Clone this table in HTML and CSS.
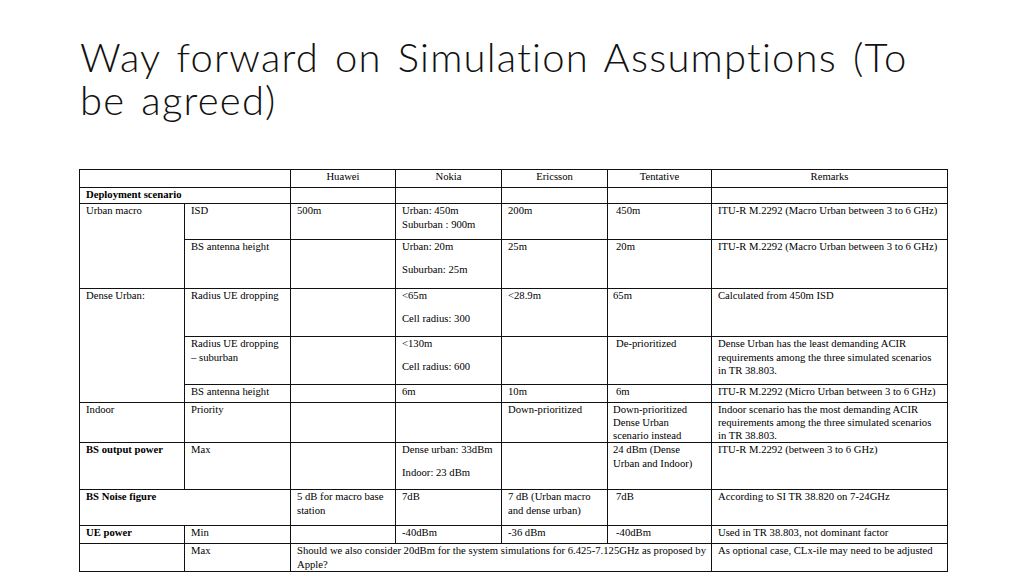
FILE: index.html
```html
<!DOCTYPE html>
<html>
<head>
<meta charset="utf-8">
<link rel="stylesheet" href="styles.css">
</head>
<body>
<div class="slide">
  <h1 class="title">Way forward on Simulation Assumptions (To be agreed)</h1>
  <table class="grid">
    <colgroup>
      <col class="c1"><col class="c2"><col class="c3"><col class="c4"><col class="c5"><col class="c6"><col class="c7">
    </colgroup>
    <tr class="r-head">
      <td colspan="2"></td>
      <td class="ctr">Huawei</td>
      <td class="ctr">Nokia</td>
      <td class="ctr">Ericsson</td>
      <td class="ctr">Tentative</td>
      <td class="ctr">Remarks</td>
    </tr>
    <tr class="r-dep">
      <td colspan="2" class="b">Deployment scenario</td>
      <td></td><td></td><td></td><td></td><td></td>
    </tr>
    <tr class="r-isd">
      <td rowspan="2">Urban macro</td>
      <td>ISD</td>
      <td>500m</td>
      <td>Urban: 450m<br>Suburban : 900m</td>
      <td>200m</td>
      <td class="t ind">450m</td>
      <td class="rm">ITU-R M.2292 (Macro Urban between 3 to 6 GHz)</td>
    </tr>
    <tr class="r-bsa">
      <td>BS antenna height</td>
      <td></td>
      <td><p>Urban: 20m</p><p>Suburban: 25m</p></td>
      <td>25m</td>
      <td class="t ind">20m</td>
      <td class="rm">ITU-R M.2292 (Macro Urban between 3 to 6 GHz)</td>
    </tr>
    <tr class="r-rad">
      <td rowspan="3">Dense Urban:</td>
      <td>Radius UE dropping</td>
      <td></td>
      <td><p>&lt;65m</p><p>Cell radius: 300</p></td>
      <td>&lt;28.9m</td>
      <td class="t">65m</td>
      <td class="rm">Calculated from 450m ISD</td>
    </tr>
    <tr class="r-rad2">
      <td>Radius UE dropping – suburban</td>
      <td></td>
      <td><p>&lt;130m</p><p>Cell radius: 600</p></td>
      <td></td>
      <td class="t ind">De-prioritized</td>
      <td class="rm">Dense Urban has the least demanding ACIR<br>requirements among the three simulated scenarios<br>in TR 38.803.</td>
    </tr>
    <tr class="r-bsa2">
      <td>BS antenna height</td>
      <td></td>
      <td>6m</td>
      <td>10m</td>
      <td class="t ind">6m</td>
      <td class="rm">ITU-R M.2292 (Micro Urban between 3 to 6 GHz)</td>
    </tr>
    <tr class="r-ind">
      <td>Indoor</td>
      <td>Priority</td>
      <td></td>
      <td></td>
      <td>Down-prioritized</td>
      <td class="t">Down-prioritized<br>Dense Urban<br>scenario instead</td>
      <td class="rm">Indoor scenario has the most demanding ACIR<br>requirements among the three simulated scenarios<br>in TR 38.803.</td>
    </tr>
    <tr class="r-out">
      <td class="b">BS output power</td>
      <td>Max</td>
      <td></td>
      <td><p>Dense urban: 33dBm</p><p>Indoor: 23 dBm</p></td>
      <td></td>
      <td class="t">24 dBm (Dense<br>Urban and Indoor)</td>
      <td class="rm">ITU-R M.2292 (between 3 to 6 GHz)</td>
    </tr>
    <tr class="r-nf">
      <td colspan="2" class="b">BS Noise figure</td>
      <td>5 dB for macro base station</td>
      <td>7dB</td>
      <td>7 dB (Urban macro<br>and dense urban)</td>
      <td class="t ind">7dB</td>
      <td class="rm">According to SI TR 38.820 on 7-24GHz</td>
    </tr>
    <tr class="r-min">
      <td class="b">UE power</td>
      <td>Min</td>
      <td></td>
      <td>-40dBm</td>
      <td>-36 dBm</td>
      <td class="t ind">-40dBm</td>
      <td class="rm">Used in TR 38.803, not dominant factor</td>
    </tr>
    <tr class="r-max">
      <td></td>
      <td>Max</td>
      <td colspan="4" class="just">Should we also consider 20dBm for the system simulations for 6.425-7.125GHz as proposed by Apple?</td>
      <td class="rm">As optional case, CLx-ile may need to be adjusted</td>
    </tr>
  </table>
</div>
</body>
</html>
```

FILE: styles.css
```css
html, body {
  margin: 0;
  padding: 0;
  background: #ffffff;
}

.slide {
  width: 1024px;
  height: 576px;
  overflow: hidden;
  padding: 36px 0 0 79px;
  box-sizing: border-box;
}

.title {
  margin: 0 0 0 1px;
  width: 860px;
  font-family: Lato, "Open Sans", sans-serif;
  font-weight: 300;
  font-size: 40px;
  line-height: 43px;
  letter-spacing: 1.2px;
  word-spacing: 4px;
  font-variant-ligatures: none;
  color: #111111;
}

.grid {
  margin-top: 47px;
  border-collapse: collapse;
  table-layout: fixed;
  width: 868px;
  font-family: "Liberation Serif", "Times New Roman", serif;
  font-size: 10.67px;
  line-height: 13.6px;
  color: #000000;
}

.c1 { width: 105px; }
.c2 { width: 106px; }
.c3 { width: 105px; }
.c4 { width: 106px; }
.c5 { width: 106px; }
.c6 { width: 104px; }
.c7 { width: 236px; }

.grid td {
  border: 1px solid #111111;
  padding: 0 4px 0 6px;
  vertical-align: top;
  text-align: left;
  overflow: hidden;
}

.grid td.t { padding-left: 5px; }
.grid td.t.ind { padding-left: 8px; }
.grid td.rm { padding-right: 2px; }

.grid td.ctr {
  text-align: center;
  padding-left: 4px;
}

.grid td.b { font-weight: bold; }

.grid td.just {
  text-align: justify;
  text-align-last: left;
  padding-right: 5px;
}

.grid p { margin: 0 0 9px 0; }
.grid p:last-child { margin-bottom: 0; }

.r-head { height: 18px; }
.r-dep { height: 16px; }
.r-isd { height: 36px; }
.r-bsa { height: 49px; }
.r-rad { height: 48px; }
.r-rad2 { height: 48px; }
.r-bsa2 { height: 18px; }
.r-ind { height: 40px; }
.r-ind td { line-height: 12.9px; }
.r-out { height: 47px; }
.r-nf { height: 36px; }
.r-min { height: 18px; }
.r-max { height: 25px; }
```
